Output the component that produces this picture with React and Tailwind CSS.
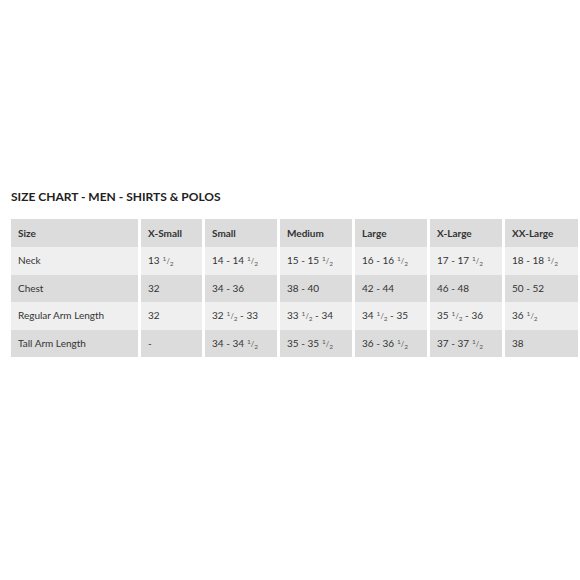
const sizes = ['X-Small', 'Small', 'Medium', 'Large', 'X-Large', 'XX-Large']

// h = half. values use h to append a ½ fraction
const rows = [
  { label: 'Neck', values: [['13', 'h'], ['14 - 14', 'h'], ['15 - 15', 'h'], ['16 - 16', 'h'], ['17 - 17', 'h'], ['18 - 18', 'h']] },
  { label: 'Chest', values: [['32'], ['34 - 36'], ['38 - 40'], ['42 - 44'], ['46 - 48'], ['50 - 52']] },
  { label: 'Regular Arm Length', values: [['32'], ['32', 'h', ' - 33'], ['33', 'h', ' - 34'], ['34', 'h', ' - 35'], ['35', 'h', ' - 36'], ['36', 'h']] },
  { label: 'Tall Arm Length', values: [['-'], ['34 - 34', 'h'], ['35 - 35', 'h'], ['36 - 36', 'h'], ['37 - 37', 'h'], ['38']] },
]

const widths = ['w-[127px]', 'w-[61px]', 'w-[72px]', 'w-[72px]', 'w-[72px]', 'w-[72px]', 'w-[73px]']

function Half() {
  return (
    <span className="ml-[3px] inline-block text-[#555]">
      <span className="relative -top-[3px] text-[6.5px]">1</span>
      <span className="text-[7.5px]">/</span>
      <span className="relative top-[2px] text-[6.5px]">2</span>
    </span>
  )
}

function Value({ parts }) {
  return (
    <>
      {parts.map((p, i) => (p === 'h' ? <Half key={i} /> : <span key={i}>{p}</span>))}
    </>
  )
}

export default function App() {
  return (
    <div className="w-[580px] h-[580px] overflow-hidden bg-white text-[#333] font-['Lato',sans-serif]">
      <div className="pt-[189px]">
        <h1 className="pl-[11px] text-[12px] font-bold text-[#222] leading-[16px]">SIZE CHART - MEN - SHIRTS &amp; POLOS</h1>
        <table className="mt-[14px] ml-[8px] w-[649px] min-w-[649px] border-separate border-spacing-x-[3px] border-spacing-y-0 text-[10px] table-fixed">
          <thead>
            <tr className="h-[28px]">
              <th className={`${widths[0]} text-left font-bold pl-[7px] bg-[#dcdcdc]`}>Size</th>
              {sizes.map((s, i) => (
                <th key={s} className={`${widths[i + 1]} text-left font-bold pl-[7px] bg-[#dcdcdc] whitespace-nowrap`}>{s}</th>
              ))}
              {/* next column, only its edge shows */}
              <th className="w-[73px] bg-[#dcdcdc]"></th>
            </tr>
          </thead>
          <tbody>
            {rows.map((r, ri) => {
              const bg = ri % 2 === 0 ? 'bg-[#efefef]' : 'bg-[#dcdcdc]'
              return (
                <tr key={r.label} className="h-[27.6px]">
                  <td className={`pl-[7px] whitespace-nowrap ${bg}`}>{r.label}</td>
                  {r.values.map((v, i) => (
                    <td key={i} className={`pl-[7px] whitespace-nowrap ${bg}`}>
                      <Value parts={v} />
                    </td>
                  ))}
                  <td className={bg}></td>
                </tr>
              )
            })}
          </tbody>
        </table>
      </div>
    </div>
  )
}
